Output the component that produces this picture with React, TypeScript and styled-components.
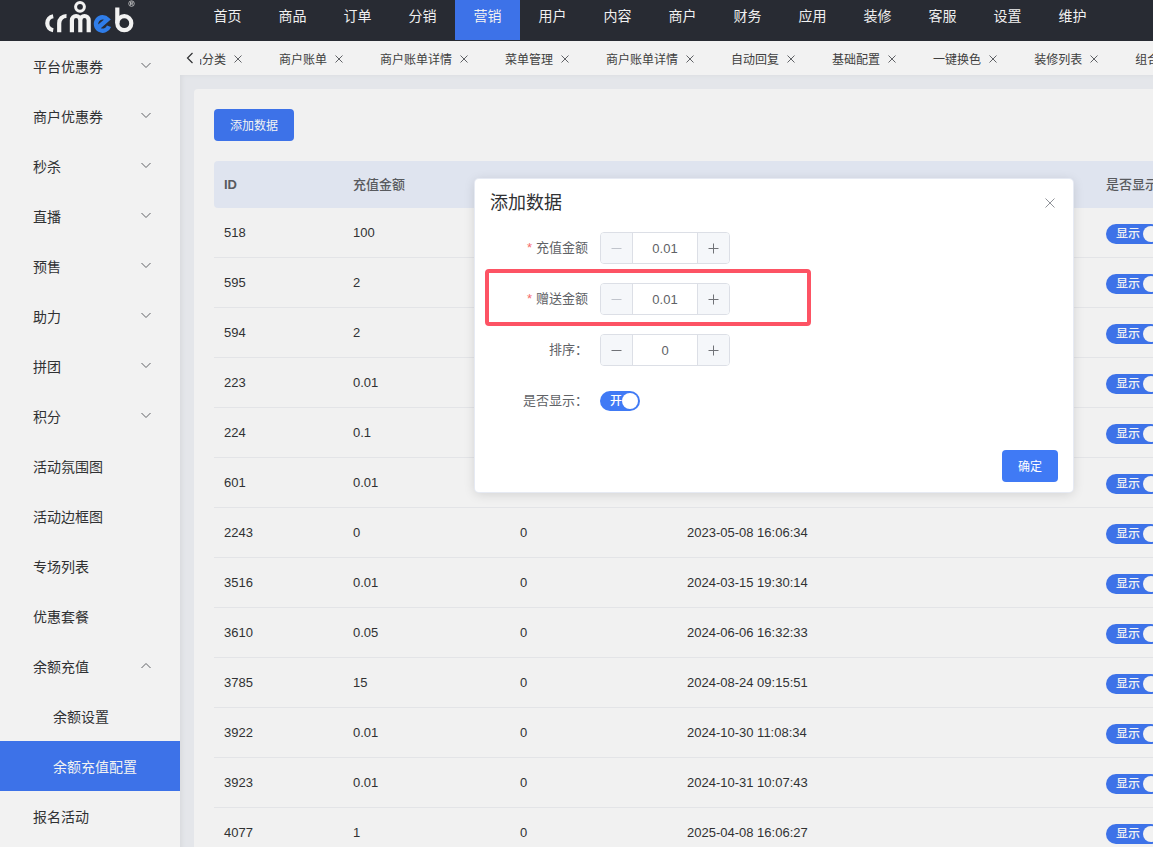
import React from 'react';
import styled, { createGlobalStyle } from 'styled-components';

const GlobalStyle = createGlobalStyle`
  *, *::before, *::after { box-sizing: border-box; }
  body {
    margin: 0;
    overflow: hidden;
    background: #f2f2f2;
    color: #303133;
    font-family: "Liberation Sans", "Noto Sans CJK SC", sans-serif;
    font-size: 14px;
  }
  a { color: inherit; text-decoration: none; }
  button, input { font: inherit; }
`;

const Shell = styled.div`
  position: relative;
  display: flex;
  flex-direction: column;
  height: 100vh;
  overflow: hidden;
`;

const TopBar = styled.header`
  display: flex;
  flex: none;
  height: 41px;
  background: #282b33;
`;

const LogoLink = styled.a`
  flex: none;
  width: 195px;
  padding-left: 40px;
`;

const TopNav = styled.nav`
  display: flex;
`;

const TopNavLink = styled.a<{ $active?: boolean }>`
  display: flex;
  flex: none;
  align-items: center;
  justify-content: center;
  width: 65px;
  height: 40px;
  padding-bottom: 10px;
  background: ${(p) => (p.$active ? '#3d72e8' : 'transparent')};
  color: #f0f0f0;
`;

const Body = styled.div`
  display: flex;
  flex: 1;
  min-height: 0;
`;

const Sidebar = styled.nav`
  z-index: 1;
  flex: none;
  width: 180px;
  overflow: hidden;
  background: #f2f2f2;
`;

const SideLink = styled.a<{ $nested?: boolean; $active?: boolean }>`
  display: flex;
  align-items: center;
  justify-content: space-between;
  height: 50px;
  padding: 0 28px 0 ${(p) => (p.$nested ? 53 : 33)}px;
  background: ${(p) => (p.$active ? '#3d72e8' : 'transparent')};
  color: ${(p) => (p.$active ? '#f2f2f2' : '#303133')};
`;

const Content = styled.div`
  display: flex;
  flex: 1;
  flex-direction: column;
  min-width: 0;
`;

const TabBar = styled.div`
  display: flex;
  flex: none;
  align-items: center;
  height: 34px;
  padding-top: 3px;
  background: #f2f2f2;
`;

const IconButton = styled.button`
  display: flex;
  flex: none;
  align-items: center;
  justify-content: center;
  padding: 0;
  border: 0;
  background: none;
  color: inherit;
`;

const ScrollButton = styled(IconButton)`
  width: 20px;
  height: 20px;
  padding-bottom: 4px;
`;

const TabStrip = styled.div`
  display: flex;
  flex: 1;
  gap: 37px;
  min-width: 0;
  overflow: hidden;
`;

const Tab = styled.div`
  display: flex;
  flex: none;
  align-items: center;
  gap: 8px;
  color: #404040;
  font-size: 12px;
  line-height: 18px;
  white-space: nowrap;

  &:first-child { margin-left: -22px; }
  button { padding-bottom: 2px; }
`;

const Workspace = styled.main`
  flex: 1;
  min-height: 0;
  padding: 14px 0 0 14px;
  background: #e4e6ea;
  box-shadow: inset 4px 2px 4px -2px #d8dade;
`;

const Card = styled.section`
  height: 100%;
  padding: 20px;
  overflow: hidden;
  border-radius: 4px 0 0 0;
  background: #f1f1f1;
`;

const PrimaryButton = styled.button<{ $width: number; $dim?: boolean }>`
  display: block;
  width: ${(p) => p.$width}px;
  height: 32px;
  padding: 0 0 2px;
  border: 0;
  border-radius: 4px;
  background: ${(p) => (p.$dim ? '#3d72e8' : '#407af5')};
  color: ${(p) => (p.$dim ? '#f2f2f2' : '#fff')};
  font-size: 12px;
`;

const DataTable = styled.table`
  width: 100%;
  min-width: 1082px;
  margin-top: 20px;
  border-collapse: separate;
  border-spacing: 0;
  table-layout: fixed;
  font-size: 13px;
`;

const HeadCell = styled.th<{ $latin?: boolean }>`
  height: 47px;
  padding: ${(p) => (p.$latin ? '0 10px' : '0 10px 2px')};
  background: #dfe4ef;
  color: #585a5e;
  font-weight: ${(p) => (p.$latin ? 700 : 500)};
  text-align: left;
  white-space: nowrap;

  &:first-child { border-radius: 4px 0 0 4px; }
`;

const Cell = styled.td`
  height: 50px;
  padding: 0 10px;
  border-bottom: 1px solid #e3e4e7;
`;

const SwitchCell = styled(Cell)`
  padding-top: 2px;
`;

const SwitchLabel = styled.label<{ $width: number; $dim?: boolean }>`
  position: relative;
  display: flex;
  align-items: center;
  justify-content: space-between;
  width: ${(p) => p.$width}px;
  height: 20px;
  padding: 0 2px 0 10px;
  border-radius: 10px;
  background: ${(p) => (p.$dim ? '#3d72e8' : '#407af5')};
  color: ${(p) => (p.$dim ? '#f2f2f2' : '#fff')};
  font-size: 12px;
  font-weight: 500;
  line-height: 20px;
  white-space: nowrap;

  input {
    position: absolute;
    inset: 0;
    margin: 0;
    opacity: 0;
  }
`;

const Knob = styled.span`
  flex: none;
  width: 16px;
  height: 16px;
  border-radius: 50%;
  background: currentColor;
`;

const Dialog = styled.div`
  position: absolute;
  top: 179px;
  left: 475px;
  z-index: 2;
  width: 598px;
  padding: 12px 15px 10px;
  border-radius: 4px;
  background: #fff;
  box-shadow: 0 0 0 1px #e6eaf3, 0 2px 12px rgba(0, 0, 0, 0.14);
`;

const DialogHead = styled.div`
  display: flex;
  align-items: center;
  justify-content: space-between;
  height: 24px;
  padding-right: 3px;
`;

const DialogTitle = styled.h2`
  margin: 0;
  color: #303133;
  font-size: 18px;
  font-weight: 400;
  line-height: 24px;
`;

const Form = styled.form`
  display: flex;
  flex-direction: column;
  gap: 19px;
  padding-top: 17px;
`;

const FormRow = styled.div`
  position: relative;
  display: flex;
  align-items: center;
  gap: 12px;
  height: 32px;
`;

const FieldLabel = styled.label`
  width: 98px;
  padding-bottom: 3px;
  color: #606266;
  font-size: 13px;
  text-align: right;
  white-space: nowrap;
`;

const Required = styled.span`
  margin-right: 4px;
  color: #f56c6c;
`;

const Stepper = styled.div`
  display: flex;
  width: 130px;
  height: 32px;
  overflow: hidden;
  border: 1px solid #dcdfe6;
  border-radius: 4px;
`;

const StepButton = styled(IconButton)`
  width: 31px;
  background: #f5f7fa;
  color: #707277;

  &:disabled { color: #c0c4cc; }
`;

const StepInput = styled.input`
  flex: 1;
  min-width: 0;
  padding: 0;
  border: solid #dcdfe6;
  border-width: 0 1px;
  outline: 0;
  background: #fff;
  color: #606266;
  font-size: 13px;
  text-align: center;
`;

const Highlight = styled.div`
  position: absolute;
  inset: -14px 247px -11px -5px;
  border: 4px solid #fd5364;
  border-radius: 4px;
  pointer-events: none;
`;

const DialogFoot = styled.div`
  display: flex;
  justify-content: flex-end;
  padding-top: 14px;
`;

const Logo = () => (
  <svg width="100" height="40" viewBox="0 0 100 40" fill="none" stroke="#f2f2f2" strokeWidth="4.2" role="img" aria-label="crmeb">
    <path d="M13.2 16.2A7.1 7.1 0 0 0 13.2 30.2" />
    <path d="M19.2 32.2V23.2A7.2 7.2 0 0 1 26.5 16" />
    <path d="M31.9 32.2V20.2A4.2 4.2 0 0 1 40.3 20.2V32.2M40.3 20.2A4.2 4.2 0 0 1 48.7 20.2V32.2" />
    <circle cx="40" cy="6.8" r="4.4" strokeWidth="3" />
    <path d="M58.8 27L67.6 19.4A6.7 6.7 0 1 0 69 26.2" stroke="#2f7de9" strokeWidth="4.4" />
    <path d="M77.3 7.5V23.2" />
    <circle cx="84.3" cy="23.2" r="7" />
    <circle cx="91.5" cy="3.6" r="2.8" strokeWidth="0.6" />
    <path d="M90.5 5.4V2H92A0.9 0.9 0 0 1 92 3.8H90.5M91.6 3.8L92.7 5.4" strokeWidth="0.6" />
  </svg>
);

const Chevron = ({ up }: { up?: boolean }) => (
  <svg width="12" height="12" viewBox="0 0 12 12" fill="none" stroke="#606266" strokeWidth="1">
    <path d={up ? 'M1.5 8L6 3.5L10.5 8' : 'M1.5 3L6 7.5L10.5 3'} />
  </svg>
);

const Cross = ({ size, color }: { size: number; color: string }) => (
  <svg width={size} height={size} viewBox={`0 0 ${size} ${size}`} fill="none" stroke={color} strokeWidth="1">
    <path d={`M0.5 0.5L${size - 0.5} ${size - 0.5}M${size - 0.5} 0.5L0.5 ${size - 0.5}`} />
  </svg>
);

const StepIcon = ({ plus }: { plus?: boolean }) => (
  <svg width="11" height="11" viewBox="0 0 11 11" fill="none" stroke="currentColor" strokeWidth="1">
    <path d={plus ? 'M0.5 5.5H10.5M5.5 0.5V10.5' : 'M0.5 5.5H10.5'} />
  </svg>
);

const Switch = ({ text, width, name, dim }: { text: string; width: number; name: string; dim?: boolean }) => (
  <SwitchLabel $width={width} $dim={dim}>
    <input type="checkbox" role="switch" id={name} defaultChecked />
    {text}
    <Knob />
  </SwitchLabel>
);

const NumberField = ({ id, label, value, required, marked }: {
  id: string; label: string; value: string; required?: boolean; marked?: boolean;
}) => (
  <FormRow>
    <FieldLabel htmlFor={id}>
      {required && <Required>*</Required>}
      {label}
    </FieldLabel>
    <Stepper>
      <StepButton type="button" disabled={required} aria-label="-"><StepIcon /></StepButton>
      <StepInput id={id} type="text" inputMode="decimal" defaultValue={value} />
      <StepButton type="button" aria-label="+"><StepIcon plus /></StepButton>
    </Stepper>
    {marked && <Highlight />}
  </FormRow>
);

const topNav = ['首页', '商品', '订单', '分销', '营销', '用户', '内容', '商户', '财务', '应用', '装修', '客服', '设置', '维护'];

const tabs = ['商品分类', '商户账单', '商户账单详情', '菜单管理', '商户账单详情', '自动回复', '基础配置', '一键换色', '装修列表', '组合数据'];

type SideItem = { text: string; arrow?: 'up' | 'down'; nested?: boolean; active?: boolean };

const sideItems: SideItem[] = [
  { text: '平台优惠券', arrow: 'down' },
  { text: '商户优惠券', arrow: 'down' },
  { text: '秒杀', arrow: 'down' },
  { text: '直播', arrow: 'down' },
  { text: '预售', arrow: 'down' },
  { text: '助力', arrow: 'down' },
  { text: '拼团', arrow: 'down' },
  { text: '积分', arrow: 'down' },
  { text: '活动氛围图' },
  { text: '活动边框图' },
  { text: '专场列表' },
  { text: '优惠套餐' },
  { text: '余额充值', arrow: 'up' },
  { text: '余额设置', nested: true },
  { text: '余额充值配置', nested: true, active: true },
  { text: '报名活动' },
];

const rows = [
  ['518', '100', '', ''],
  ['595', '2', '', ''],
  ['594', '2', '', ''],
  ['223', '0.01', '', ''],
  ['224', '0.1', '', ''],
  ['601', '0.01', '', ''],
  ['2243', '0', '0', '2023-05-08 16:06:34'],
  ['3516', '0.01', '0', '2024-03-15 19:30:14'],
  ['3610', '0.05', '0', '2024-06-06 16:32:33'],
  ['3785', '15', '0', '2024-08-24 09:15:51'],
  ['3922', '0.01', '0', '2024-10-30 11:08:34'],
  ['3923', '0.01', '0', '2024-10-31 10:07:43'],
  ['4077', '1', '0', '2025-04-08 16:06:27'],
];

export default function App() {
  return (
    <Shell>
      <GlobalStyle />
      <TopBar>
        <LogoLink href="#"><Logo /></LogoLink>
        <TopNav>
          {topNav.map((t) => (
            <TopNavLink key={t} href="#" $active={t === '营销'}>{t}</TopNavLink>
          ))}
        </TopNav>
      </TopBar>
      <Body>
        <Sidebar>
          {sideItems.map((s) => (
            <SideLink key={s.text} href="#" $nested={s.nested} $active={s.active}>
              {s.text}
              {s.arrow && <Chevron up={s.arrow === 'up'} />}
            </SideLink>
          ))}
        </Sidebar>
        <Content>
          <TabBar>
            <ScrollButton type="button">
              <svg width="8" height="12" viewBox="0 0 8 12" fill="none" stroke="#303133" strokeWidth="1.2">
                <path d="M6.5 1L1.5 6L6.5 11" />
              </svg>
            </ScrollButton>
            <TabStrip>
              {tabs.map((t, i) => (
                <Tab key={i}>
                  {t}
                  <IconButton type="button"><Cross size={8} color="#606266" /></IconButton>
                </Tab>
              ))}
            </TabStrip>
          </TabBar>
          <Workspace>
            <Card>
              <PrimaryButton type="button" $width={80} $dim>添加数据</PrimaryButton>
              <DataTable>
                <colgroup>
                  <col width="129" />
                  <col width="167" />
                  <col width="167" />
                  <col width="419" />
                  <col />
                </colgroup>
                <thead>
                  <tr>
                    <HeadCell $latin>ID</HeadCell>
                    <HeadCell>充值金额</HeadCell>
                    <HeadCell />
                    <HeadCell />
                    <HeadCell>是否显示</HeadCell>
                  </tr>
                </thead>
                <tbody>
                  {rows.map((r) => (
                    <tr key={r[0]}>
                      {r.map((c, i) => <Cell key={i}>{c}</Cell>)}
                      <SwitchCell><Switch text="显示" width={55} name={`show-${r[0]}`} dim /></SwitchCell>
                    </tr>
                  ))}
                </tbody>
              </DataTable>
            </Card>
          </Workspace>
        </Content>
      </Body>
      <Dialog role="dialog" aria-labelledby="dialog-title">
        <DialogHead>
          <DialogTitle id="dialog-title">添加数据</DialogTitle>
          <IconButton type="button"><Cross size={10} color="#909399" /></IconButton>
        </DialogHead>
        <Form>
          <NumberField id="amount" label="充值金额" value="0.01" required />
          <NumberField id="bonus" label="赠送金额" value="0.01" required marked />
          <NumberField id="sort" label="排序：" value="0" />
          <FormRow>
            <FieldLabel htmlFor="visible">是否显示：</FieldLabel>
            <Switch text="开" width={40} name="visible" />
          </FormRow>
          <DialogFoot>
            <PrimaryButton type="button" $width={56}>确定</PrimaryButton>
          </DialogFoot>
        </Form>
      </Dialog>
    </Shell>
  );
}
